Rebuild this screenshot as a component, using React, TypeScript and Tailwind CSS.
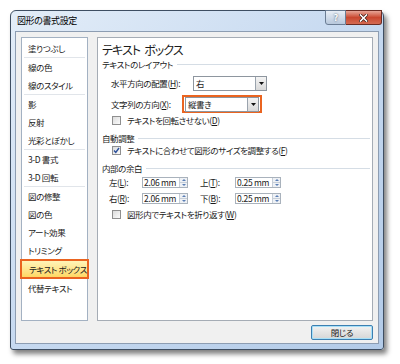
const jp = "font-['Noto_Sans_CJK_JP','Noto_Sans_CJK_SC',sans-serif] [font-feature-settings:'palt']";

const groups: string[][] = [
  ['塗りつぶし'],
  ['線の色', '線のスタイル'],
  ['影', '反射', '光彩とぼかし'],
  ['3-D 書式', '3-D 回転'],
  ['図の修整', '図の色', 'アート効果', 'トリミング', 'テキスト ボックス', '代替テキスト'],
];

function ArrowButton() {
  return (
    <div className="w-[11px] h-full border-l border-[#9aa3ad] bg-gradient-to-b from-[#f4f4f4] to-[#d9d9d9] flex items-center justify-center">
      <svg width="5" height="3" viewBox="0 0 5 3">
        <path d="M0 0h5L2.5 3z" fill="#111" />
      </svg>
    </div>
  );
}

function Dropdown({ value, width }: { value: string; width: string }) {
  return (
    <div className={`${width} h-[15px] bg-white border border-[#8e969f] flex items-stretch`}>
      <span className="flex-1 pl-[2px] leading-[13px]">{value}</span>
      <ArrowButton />
    </div>
  );
}

function Checkbox({ checked }: { checked?: boolean }) {
  return (
    <div className="w-[9px] h-[9px] border border-[#8f8f8f] bg-gradient-to-br from-[#dcdcdc] to-[#fbfbfb] flex items-center justify-center">
      {checked && (
        <svg width="7" height="7" viewBox="0 0 7 7">
          <path d="M1 3.5l1.8 2L6 1" stroke="#2a4f9a" strokeWidth="1.4" fill="none" />
        </svg>
      )}
    </div>
  );
}

function Spin({ value }: { value: string }) {
  return (
    <div className="w-[46px] h-[11px] bg-white border border-[#a9b2bc] flex items-stretch">
      <span className="flex-1 pl-[1px] leading-[9px] whitespace-nowrap tracking-[-0.3px]">{value}</span>
      <div className="w-[8px] border-l border-[#c6ced8] flex flex-col">
        <div className="flex-1 flex items-center justify-center bg-[#eef1f5] border-b border-[#c6ced8]">
          <svg width="4" height="2" viewBox="0 0 4 2"><path d="M0 2h4L2 0z" fill="#5a7fb5" /></svg>
        </div>
        <div className="flex-1 flex items-center justify-center bg-[#eef1f5]">
          <svg width="4" height="2" viewBox="0 0 4 2"><path d="M0 0h4L2 2z" fill="#5a7fb5" /></svg>
        </div>
      </div>
    </div>
  );
}

function GroupHeader({ label }: { label: string }) {
  return (
    <div className="h-[12px] flex items-center">
      <span className="leading-[12px] whitespace-nowrap">{label}</span>
      <div className="flex-1 h-px bg-[#d5dde5] ml-[4px] mr-[2px]" />
    </div>
  );
}

export default function App() {
  return (
    <div className={`w-[400px] h-[364px] bg-white pl-[10px] pt-[10px] text-[8.5px] tracking-[-0.4px] text-[#1a1a1a] ${jp}`}>
      {/* window frame */}
      <div className="relative w-[374px] h-[340px] rounded-t-[6px] rounded-b-[3px] border border-[#3e4e62] bg-gradient-to-br from-[#e3edf8] via-[#c6d9f0] to-[#b3cbe8] shadow-[3px_4px_5px_rgba(0,0,0,0.5)] flex flex-col">
        {/* title bar */}
        <div className="h-[20px] pl-[6px] flex items-center">
          <span className="text-[9px] leading-[10px] text-black">図形の書式設定</span>
        </div>
        <div className="absolute -top-px right-[1px] flex h-[15px]">
          <div className="w-[21px] rounded-bl-[3px] border border-[#6b7d94] bg-gradient-to-b from-[#e8eef6] to-[#b8c8dc] flex items-center justify-center text-[9px] font-bold text-white [text-shadow:0_0_2px_#33445a] leading-none">
            ?
          </div>
          <div className="w-[36px] rounded-br-[3px] border border-l-0 border-[#6b2b22] bg-gradient-to-b from-[#e6a597] via-[#c9472f] to-[#d46a52] flex items-center justify-center">
            <svg width="9" height="8" viewBox="0 0 9 8">
              <path d="M1.5 1l6 6M7.5 1l-6 6" stroke="#3a1a14" strokeWidth="3" strokeLinecap="square" />
              <path d="M1.5 1l6 6M7.5 1l-6 6" stroke="#fff" strokeWidth="1.6" strokeLinecap="square" />
            </svg>
          </div>
        </div>

        {/* client area */}
        <div className="ml-[4px] w-[364px] h-[313px] bg-[#f0f0f0] border border-[#8d9db2] pt-[5px] pb-[3px] px-[5px] flex flex-col">
          <div className="flex gap-[9px] h-[284px]">
            {/* category list */}
            <div className="w-[67px] h-full bg-white border border-[#a3b1c2] pt-px">
              {groups.map((g, gi) => (
                <div key={gi}>
                  {gi > 0 && <div className="h-px mx-[2px] bg-[#e1e5ea]" />}
                  {g.map((item) =>
                    item === 'テキスト ボックス' ? (
                      <div
                        key={item}
                        className="-mx-[2px] h-[20px] pl-[7px] border-2 border-[#ea6420] bg-gradient-to-b from-[#fff4b8] to-[#ffd862] flex items-center"
                      >
                        <span className="leading-[10px] whitespace-nowrap">{item}</span>
                      </div>
                    ) : (
                      <div key={item} className="h-[18px] pl-[6px] flex items-center">
                        <span className="leading-[10px] whitespace-nowrap">{item}</span>
                      </div>
                    )
                  )}
                </div>
              ))}
            </div>

            {/* settings panel */}
            <div className="w-[276px] h-full bg-white border border-[#a5acb5] pl-[4px] flex flex-col">
              <div className="mt-[4px] h-[16px] text-[12px] leading-[16px] tracking-[-0.9px] flex gap-[4px]">
                <span>テキスト</span>
                <span>ボックス</span>
              </div>
              <GroupHeader label="テキストのレイアウト" />

              <div className="mt-[6px] ml-[9px] flex items-center h-[15px]">
                <span className="w-[82px] whitespace-nowrap">水平方向の配置(<span className="underline">H</span>):</span>
                <Dropdown value="右" width="w-[74px]" />
              </div>

              <div className="mt-[4px] ml-[9px] flex items-center h-[18px]">
                <span className="w-[71px] whitespace-nowrap">文字列の方向(<span className="underline">X</span>):</span>
                <div className="w-[80px] h-[18px] border-2 border-[#ea6420] p-px flex items-center">
                  <Dropdown value="縦書き" width="w-[74px]" />
                </div>
              </div>

              <div className="mt-px ml-[10px] flex items-center h-[12px] gap-[6px]">
                <Checkbox />
                <span className="whitespace-nowrap">テキストを回転させない(<span className="underline">D</span>)</span>
              </div>

              <div className="mt-[6px]">
                <GroupHeader label="自動調整" />
              </div>
              <div className="ml-[10px] flex items-center h-[12px] gap-[6px]">
                <Checkbox checked />
                <span className="whitespace-nowrap">テキストに合わせて図形のサイズを調整する(<span className="underline">F</span>)</span>
              </div>

              <div className="mt-[6px]">
                <GroupHeader label="内部の余白" />
              </div>
              <div className="mt-[2px] ml-[7px] flex items-center h-[12px]">
                <span className="w-[33px] whitespace-nowrap">左(<span className="underline">L</span>):</span>
                <Spin value="2.06 mm" />
                <span className="ml-[12px] w-[35px] whitespace-nowrap">上(<span className="underline">T</span>):</span>
                <Spin value="0.25 mm" />
              </div>
              <div className="mt-[4px] ml-[7px] flex items-center h-[12px]">
                <span className="w-[33px] whitespace-nowrap">右(<span className="underline">R</span>):</span>
                <Spin value="2.06 mm" />
                <span className="ml-[12px] w-[35px] whitespace-nowrap">下(<span className="underline">B</span>):</span>
                <Spin value="0.25 mm" />
              </div>
              <div className="mt-[4px] ml-[10px] flex items-center h-[12px] gap-[6px]">
                <Checkbox />
                <span className="whitespace-nowrap">図形内でテキストを折り返す(<span className="underline">W</span>)</span>
              </div>
            </div>
          </div>

          <div className="mt-[4px] flex justify-end">
            <div className="w-[62px] h-[15px] rounded-[2px] border border-[#3c7fb1] shadow-[inset_0_0_0_1px_#a8e0f8] bg-gradient-to-b from-[#f2f2f2] to-[#d6d6d6] flex items-center justify-center leading-none">
              閉じる
            </div>
          </div>
        </div>
      </div>
    </div>
  );
}
